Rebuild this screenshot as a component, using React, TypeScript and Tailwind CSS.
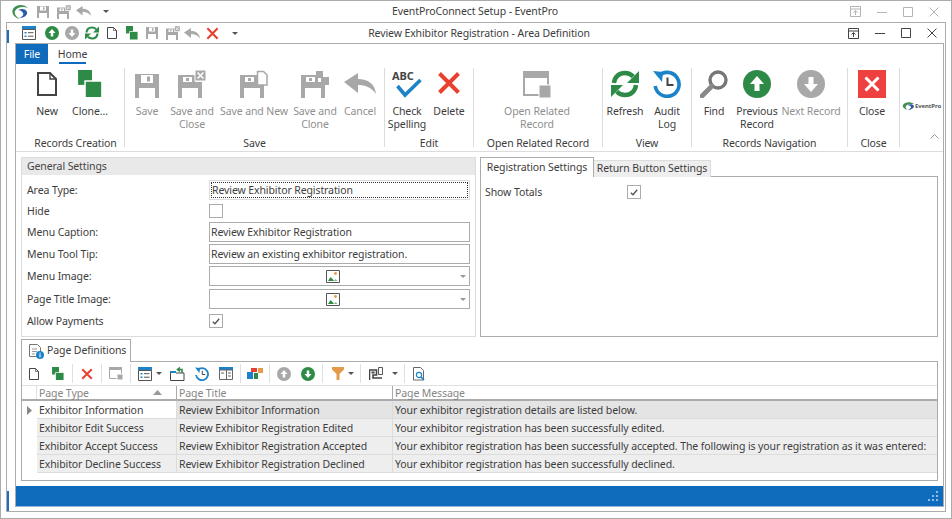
import React from "react";

const GREEN = "#2e8b47";
const GRAY = "#a8a8a8";
const BLUE = "#1d83c9";
const RED = "#e8412f";

type IconProps = { size?: number; color?: string };

const Floppy = ({ size = 24, color = GRAY }: IconProps) => (
  <svg width={size} height={size} viewBox="0 0 24 24" className="block shrink-0">
    <path d="M0 0h24v24H0z" fill={color} />
    <path d="M6 1h12v8H6z" fill="#fff" />
    <path d="M12 2.5h3v5h-3z" fill={color} />
    <path d="M4 14h16v10H4z" fill="#fff" />
  </svg>
);

const FloppyBadge = ({ size = 28, badge }: { size?: number; badge: "x" | "doc" | "clone" }) => (
  <svg width={size} height={size} viewBox="0 0 28 28" className="block shrink-0">
    <path d="M0 5h17v7h7v16H0z" fill={GRAY} />
    <path d="M5 7h9v5H5z" fill="#fff" />
    <path d="M8 8h3v3H8z" fill={GRAY} />
    <path d="M4 18h16v10H4z" fill="#fff" />
    {badge === "x" && (
      <>
        <path d="M17 0h11v11H17z" fill={GRAY} stroke="#fff" />
        <path d="M19.5 2.5l6 6M25.5 2.5l-6 6" stroke="#fff" strokeWidth="1.6" />
      </>
    )}
    {badge === "doc" && (
      <path d="M17.5 1.5h6l3.5 3.5v10h-9.5z" fill="#fff" stroke={GRAY} strokeWidth="1.5" />
    )}
    {badge === "clone" && (
      <>
        <path d="M15 1h7v7h-7z" fill={GRAY} />
        <path d="M20 7h8v8h-8z" fill={GRAY} />
      </>
    )}
  </svg>
);

const Undo = ({ size = 32, color = GRAY }: IconProps) => (
  <svg width={size} height={(size * 22) / 32} viewBox="0 0 32 22" className="block shrink-0">
    <path d="M0 9L14 0v6C24 6 31 11 32 21 27 14 21 12 14 12v8z" fill={color} />
  </svg>
);

const Cross = ({ size = 24, color = RED }: IconProps) => (
  <svg width={size} height={size} viewBox="0 0 24 24" className="block shrink-0">
    <path d="M2.5 2.5l19 19M21.5 2.5l-19 19" stroke={color} strokeWidth="4" fill="none" />
  </svg>
);

const Doc = ({ w = 20, h = 24, color = "#444" }: { w?: number; h?: number; color?: string }) => (
  <svg width={w} height={h} viewBox="0 0 20 24" className="block shrink-0">
    <path d="M1 1h12l6 6v16H1z" fill="#fff" stroke={color} strokeWidth="2" />
    <path d="M13 1v6h6" fill="none" stroke={color} strokeWidth="1.4" />
  </svg>
);

const Clone = ({ size = 24 }: IconProps) => (
  <svg width={size} height={size * 1.16} viewBox="0 0 24 28" className="block shrink-0">
    <path d="M0 0h14v15H0z" fill={GREEN} />
    <path d="M7 11h17v17H7z" fill={GREEN} stroke="#fff" strokeWidth="1.5" />
  </svg>
);

const CircleArrow = ({ size = 28, color = GREEN, down = false }: IconProps & { down?: boolean }) => (
  <svg width={size} height={size} viewBox="0 0 28 28" className="block shrink-0">
    <circle cx="14" cy="14" r="14" fill={color} />
    <path
      d={down ? "M14 22l-7-8h4.5V7h5v7H21z" : "M14 6l7 8h-4.5v7h-5v-7H7z"}
      fill="#fff"
    />
  </svg>
);

const Refresh = ({ size = 28, color = GREEN }: IconProps) => (
  <svg width={size} height={size} viewBox="0 0 28 28" className="block shrink-0">
    <path d="M3 13C3.5 7 8 3 14 3c3.5 0 6.2 1.4 8.2 3.6" fill="none" stroke={color} strokeWidth="4.4" />
    <path d="M28 1v12H16z" fill={color} />
    <path d="M25 15c-.5 6-5 10-11 10-3.5 0-6.2-1.4-8.2-3.6" fill="none" stroke={color} strokeWidth="4.4" />
    <path d="M0 27V15h12z" fill={color} />
  </svg>
);

const History = ({ size = 28, color = BLUE }: IconProps) => (
  <svg width={size} height={size} viewBox="0 0 28 28" className="block shrink-0">
    <path d="M5 6.5A12 12 0 1 1 2.2 16" fill="none" stroke={color} strokeWidth="3.6" />
    <path d="M0 1l10 1-1 10z" fill={color} />
    <path d="M14.5 7.5v7.5h6" fill="none" stroke="#444" strokeWidth="2" />
  </svg>
);

const Magnifier = () => (
  <svg width="28" height="28" viewBox="0 0 28 28" className="block shrink-0">
    <circle cx="18" cy="10" r="8" fill="#fff" stroke="#777" strokeWidth="3.4" />
    <path d="M12 16L2 26" stroke="#888" strokeWidth="4.6" strokeLinecap="round" />
  </svg>
);

const OpenRelated = () => (
  <svg width="28" height="27" viewBox="0 0 28 27" className="block shrink-0">
    <path d="M0 0h26v6H0z" fill={GRAY} />
    <path d="M1 6h24v18H1z" fill="#fff" stroke={GRAY} strokeWidth="2" />
    <path d="M16 14h12v13H16z" fill={GRAY} stroke="#fff" />
  </svg>
);

const AppWindow = ({ size = 14 }: IconProps) => (
  <svg width={size} height={size} viewBox="0 0 14 14" className="block shrink-0">
    <path d="M0 0h14v3.5H0z" fill={BLUE} />
    <path d="M.5 3.5h13v10H.5z" fill="#fff" stroke="#555" />
    <path d="M2.5 6h2v1.5h-2zM2.5 9.5h2V11h-2z" fill={BLUE} />
    <path d="M6 6.7h5.5M6 10.2h5.5" stroke="#555" />
  </svg>
);

const ImageGlyph = () => (
  <svg width="14" height="13" viewBox="0 0 14 13" className="block shrink-0">
    <path d="M.5.5h13v12H.5z" fill="#fff" stroke="#555" />
    <circle cx="9.5" cy="3.5" r="1.4" fill="#e39a4a" />
    <path d="M2 11l2.5-4L7 9.5 8 11z" fill={GREEN} />
    <path d="M8 11l1.5-2 2 2z" fill="#7fb08d" />
  </svg>
);

const Drop = ({ color = "#555" }: { color?: string }) => (
  <svg width="6" height="3" viewBox="0 0 6 3" className="block shrink-0">
    <path d="M0 0h6L3 3z" fill={color} />
  </svg>
);

const Check = () => (
  <svg width="8" height="7" viewBox="0 0 8 7">
    <path d="M.8 3.8l2.2 2L7.2.8" fill="none" stroke="#555" strokeWidth="1.4" />
  </svg>
);

const CheckBox = ({ checked = false }: { checked?: boolean }) => (
  <span className="flex h-[14px] w-[14px] items-center justify-center border border-[#ababab] bg-white">
    {checked && <Check />}
  </span>
);

const Sep = ({ className }: { className: string }) => (
  <span className={`h-[19px] w-px shrink-0 bg-[#e0e0e0] ${className}`} />
);

const WinControls = ({ color }: { color: string }) => (
  <>
    <svg width="11" height="11" viewBox="0 0 11 11" className="block">
      <path d="M.5.5h10v10H.5zM.5 3h10" fill="none" stroke={color} />
      <path d="M5.5 9V5M3.5 6.5l2-2 2 2" fill="none" stroke={color} />
    </svg>
    <svg width="10" height="10" viewBox="0 0 10 10" className="ml-[16px] block">
      <path d="M0 5.5h10" stroke={color} />
    </svg>
    <svg width="10" height="10" viewBox="0 0 10 10" className="ml-[16px] block">
      <path d="M.5.5h9v9h-9z" fill="none" stroke={color} />
    </svg>
    <svg width="10" height="10" viewBox="0 0 10 10" className="ml-[16px] block">
      <path d="M.5.5l9 9M9.5.5l-9 9" fill="none" stroke={color} />
    </svg>
  </>
);

const RibbonBtn = ({
  className,
  lines,
  disabled,
  children,
}: {
  className: string;
  lines: string[];
  disabled?: boolean;
  children: React.ReactNode;
}) => (
  <div className={`flex shrink-0 flex-col items-center pt-[2px] ${className}`}>
    <div className="flex h-[28px] items-end justify-center">{children}</div>
    <div
      className={`mt-[7px] whitespace-nowrap text-center leading-[13px] ${
        disabled ? "text-[#8f8f8f]" : "text-[#3d3d3d]"
      }`}
    >
      {lines.map((l) => (
        <div key={l}>{l}</div>
      ))}
    </div>
  </div>
);

const RibbonGroup = ({
  className,
  label,
  children,
}: {
  className: string;
  label: string;
  children: React.ReactNode;
}) => (
  <div className={`flex shrink-0 flex-col border-r border-[#dcdcdc] ${className}`}>
    <div className="flex h-[68px]">{children}</div>
    <div className="h-[11px] whitespace-nowrap pt-[1px] text-center leading-[13px] text-[#3d3d3d]">{label}</div>
  </div>
);

const FormRow = ({
  label,
  className,
  children,
}: {
  label: string;
  className: string;
  children: React.ReactNode;
}) => (
  <div className={`flex items-center ${className}`}>
    <div className="w-[182px] shrink-0 text-[#3d3d3d]">{label}</div>
    {children}
  </div>
);

const TextField = ({ value }: { value: string }) => (
  <div className="flex h-[20px] w-[261px] items-center border border-[#ababab] bg-white pl-[1px] text-[#3d3d3d]">
    {value}
  </div>
);

const ImageField = () => (
  <div className="flex h-[20px] w-[261px] items-center border border-[#ababab] bg-white">
    <div className="flex flex-1 justify-center">
      <ImageGlyph />
    </div>
    <div className="flex w-[13px] justify-center">
      <Drop color="#999" />
    </div>
  </div>
);

const rows = [
  ["Exhibitor Information", "Review Exhibitor Information", "Your exhibitor registration details are listed below."],
  ["Exhibitor Edit Success", "Review Exhibitor Registration Edited", "Your exhibitor registration has been successfully edited."],
  ["Exhibitor Accept Success", "Review Exhibitor Registration Accepted", "Your exhibitor registration has been successfully accepted. The following is your registration as it was entered:"],
  ["Exhibitor Decline Success", "Review Exhibitor Registration Declined", "Your exhibitor registration has been successfully declined."],
];

export default function App() {
  return (
    <div className="flex h-[519px] w-[952px] flex-col overflow-hidden border border-[#ababab] bg-white font-['Noto_Sans',sans-serif] text-[10.5px] leading-[13px] tracking-[-0.1px]">
      {/* outer title bar */}
      <div className="grid h-[21px] shrink-0 grid-cols-[1fr_auto_1fr] items-center">
        <div className="flex items-center pl-[11px]">
          <svg width="16" height="14" viewBox="0 0 16 14" className="block">
            <path d="M16 3C12-1 4-1 1 4c-2 4 1 9 7 10-4-2-6-5-5-8 2-4 8-5 13-3z" fill="#3f8f4f" />
            <path d="M6 5c4-2 8-1 9 2 1 3-3 6-8 6 3-1 5-3 4-5-1-2-3-3-5-3z" fill="#2a5ca8" />
          </svg>
          <span className="ml-[9px]"><Floppy size={12} /></span>
          <span className="ml-[8px]"><FloppyBadge size={14} badge="x" /></span>
          <span className="ml-[5px]"><Undo size={15} /></span>
          <span className="ml-[12px]"><Drop /></span>
        </div>
        <div className="whitespace-nowrap pr-[2px] text-[#3d3d3d]">EventProConnect Setup - EventPro</div>
        <div className="flex items-center justify-end pr-[12px]">
          <WinControls color="#b4b4b4" />
        </div>
      </div>

      {/* child window */}
      <div className="ml-[5px] flex h-[490px] w-[940px] shrink-0 flex-col border border-[#ababab]">
        <div className="grid h-[20px] shrink-0 grid-cols-[1fr_auto_1fr] items-center">
          <div className="flex items-center pl-[15px]">
            <AppWindow />
            <span className="ml-[9px]"><CircleArrow size={14} /></span>
            <span className="ml-[6px]"><CircleArrow size={14} color={GRAY} down /></span>
            <span className="ml-[6px]"><Refresh size={14} /></span>
            <span className="ml-[8px]"><Doc w={10} h={12} /></span>
            <span className="ml-[9px]"><Clone size={12} /></span>
            <span className="ml-[8px]"><Floppy size={12} /></span>
            <span className="ml-[8px]"><FloppyBadge size={14} badge="x" /></span>
            <span className="ml-[4px]"><Undo size={16} /></span>
            <span className="ml-[6px]"><Cross size={13} /></span>
            <span className="ml-[13px]"><Drop /></span>
          </div>
          <div className="whitespace-nowrap pl-[6px] text-[#3d3d3d]">Review Exhibitor Registration - Area Definition</div>
          <div className="flex items-center justify-end pr-[8px]">
            <WinControls color="#444" />
          </div>
        </div>

        <div className="flex min-h-0 flex-1">
          <div className="flex w-[8px] shrink-0 flex-col justify-between">
            <div className="-mt-[13px] h-[13px] w-[2px] bg-[#1d6fbe]" />
            <div className="h-[20px] w-[2px] bg-[#1d6fbe]" />
          </div>

          <div className="mb-[4px] flex w-[929px] shrink-0 flex-col border-x border-t border-x-[#ababab] border-t-[#ababab]">
            {/* tabs */}
            <div className="flex h-[20px] shrink-0 items-center">
              <div className="flex h-[20px] w-[32px] items-center justify-center bg-[#0f6cbd] text-white">File</div>
              <div className="ml-[11px] flex h-[20px] w-[27px] flex-col items-center justify-between pt-[4px] text-[#3d3d3d]">
                <span>Home</span>
                <span className="h-[2px] w-[27px] bg-[#0f6cbd]" />
              </div>
            </div>

            {/* ribbon */}
            <div className="flex h-[88px] shrink-0 border-b border-[#dcdcdc] py-[4px]">
              <RibbonGroup className="w-[109px] pl-[11px]" label="Records Creation">
                <RibbonBtn className="w-[40px]" lines={["New"]}>
                  <span className="mb-[2px]"><Doc /></span>
                </RibbonBtn>
                <RibbonBtn className="w-[46px]" lines={["Clone..."]}>
                  <Clone />
                </RibbonBtn>
              </RibbonGroup>
              <RibbonGroup className="w-[260px]" label="Save">
                <RibbonBtn className="w-[44px]" lines={["Save"]} disabled><Floppy /></RibbonBtn>
                <RibbonBtn className="w-[46px]" lines={["Save and", "Close"]} disabled><FloppyBadge badge="x" /></RibbonBtn>
                <RibbonBtn className="w-[78px]" lines={["Save and New"]} disabled><FloppyBadge badge="doc" /></RibbonBtn>
                <RibbonBtn className="w-[44px]" lines={["Save and", "Clone"]} disabled><FloppyBadge badge="clone" /></RibbonBtn>
                <RibbonBtn className="w-[46px]" lines={["Cancel"]} disabled>
                  <span className="mb-[3px]"><Undo /></span>
                </RibbonBtn>
              </RibbonGroup>
              <RibbonGroup className="w-[89px]" label="Edit">
                <RibbonBtn className="w-[44px]" lines={["Check", "Spelling"]}>
                  <div className="flex w-[30px] flex-col">
                    <span className="text-[11px] font-bold leading-[11px] text-[#444]">ABC</span>
                    <svg width="30" height="20" viewBox="0 0 30 20" className="-mt-[3px] block">
                      <path d="M5.5 8l7.5 9L28.5 2" fill="none" stroke={BLUE} strokeWidth="3.6" />
                    </svg>
                  </div>
                </RibbonBtn>
                <RibbonBtn className="w-[40px]" lines={["Delete"]}>
                  <span className="mb-[3px]"><Cross /></span>
                </RibbonBtn>
              </RibbonGroup>
              <RibbonGroup className="w-[129px]" label="Open Related Record">
                <RibbonBtn className="w-[126px]" lines={["Open Related", "Record"]} disabled><OpenRelated /></RibbonBtn>
              </RibbonGroup>
              <RibbonGroup className="w-[89px]" label="View">
                <RibbonBtn className="w-[44px]" lines={["Refresh"]}><Refresh /></RibbonBtn>
                <RibbonBtn className="w-[40px]" lines={["Audit", "Log"]}><History /></RibbonBtn>
              </RibbonGroup>
              <RibbonGroup className="w-[156px]" label="Records Navigation">
                <RibbonBtn className="w-[44px]" lines={["Find"]}><Magnifier /></RibbonBtn>
                <RibbonBtn className="w-[42px]" lines={["Previous", "Record"]}><CircleArrow /></RibbonBtn>
                <RibbonBtn className="w-[66px]" lines={["Next Record"]} disabled><CircleArrow color={GRAY} down /></RibbonBtn>
              </RibbonGroup>
              <RibbonGroup className="w-[52px]" label="Close">
                <RibbonBtn className="w-[48px]" lines={["Close"]}>
                  <svg width="28" height="28" viewBox="0 0 28 28" className="block">
                    <path d="M0 0h28v28H0z" fill="#ef4040" />
                    <path d="M7.5 7.5l13 13M20.5 7.5l-13 13" stroke="#fff" strokeWidth="3" />
                  </svg>
                </RibbonBtn>
              </RibbonGroup>
              <div className="flex flex-1 flex-col">
                <div className="mt-[34px] flex items-center justify-center">
                  <svg width="13" height="8" viewBox="0 0 13 8" className="block">
                    <path d="M12 2C9-.5 3-.5 1 3c-1 2 1 4 5 5-2-1-3-3-2-4 1-2 5-2 8-2z" fill="#3f8f4f" />
                    <path d="M5 3c3-1 6-1 7 1 0 2-3 4-6 4 2-1 3-2 3-3S7 3 5 3z" fill="#2a5ca8" />
                  </svg>
                  <span className="whitespace-nowrap text-[6px] font-bold leading-[8px] tracking-[-0.1px] text-[#555]">EventPro</span>
                </div>
                <div className="mt-[24px] flex justify-end pr-[4px]">
                  <svg width="9" height="5" viewBox="0 0 9 5" className="block">
                    <path d="M.5 4.5l4-4 4 4" fill="none" stroke="#999" />
                  </svg>
                </div>
              </div>
            </div>

            {/* content */}
            <div className="flex min-h-0 flex-1 flex-col px-[5px] pt-[5px]">
              <div className="flex h-[180px] shrink-0 gap-[4px]">
                <div className="flex w-[455px] shrink-0 flex-col border border-[#dcdcdc]">
                  <div className="flex h-[17px] shrink-0 items-center bg-[#e9e9e9] pl-[5px] text-[#444]">General Settings</div>
                  <div className="flex flex-col pl-[5px] pt-[5px]">
                    <FormRow label="Area Type:" className="h-[20px]">
                      <div className="flex h-[20px] w-[261px] items-center border border-[#dcdcdc] bg-white p-[1px]">
                        <div className="flex h-full w-full items-center border border-dotted border-[#333] text-[#3d3d3d]">
                          Review Exhibitor Registration
                        </div>
                      </div>
                    </FormRow>
                    <FormRow label="Hide" className="h-[22px]"><CheckBox /></FormRow>
                    <FormRow label="Menu Caption:" className="h-[20px]"><TextField value="Review Exhibitor Registration" /></FormRow>
                    <FormRow label="Menu Tool Tip:" className="mt-[2px] h-[20px]"><TextField value="Review an existing exhibitor registration." /></FormRow>
                    <FormRow label="Menu Image:" className="mt-[2px] h-[20px]"><ImageField /></FormRow>
                    <FormRow label="Page Title Image:" className="mt-[3px] h-[20px]"><ImageField /></FormRow>
                    <FormRow label="Allow Payments" className="h-[24px]"><CheckBox checked /></FormRow>
                  </div>
                </div>

                <div className="flex w-[458px] shrink-0 flex-col">
                  <div className="relative z-10 -mb-px flex h-[20px] shrink-0 items-end">
                    <div className="flex h-[20px] w-[114px] items-center justify-center whitespace-nowrap border border-b-0 border-[#ababab] bg-white text-[#3d3d3d]">
                      Registration Settings
                    </div>
                    <div className="flex h-[17px] w-[117px] items-center justify-center whitespace-nowrap border-t border-r border-[#dcdcdc] bg-[#eeeeee] pb-[2px] text-[#3d3d3d]">
                      Return Button Settings
                    </div>
                  </div>
                  <div className="flex-1 border border-[#ababab] bg-white pl-[4px] pt-[8px]">
                    <div className="flex items-center">
                      <div className="w-[142px] text-[#3d3d3d]">Show Totals</div>
                      <CheckBox checked />
                    </div>
                  </div>
                </div>
              </div>

              {/* page definitions */}
              <div className="mt-[2px] flex flex-col">
                <div className="relative z-10 -mb-px flex">
                  <div className="flex h-[23px] w-[110px] items-center border border-b-0 border-[#ababab] bg-white pl-[7px] text-[#3d3d3d]">
                    <svg width="15" height="15" viewBox="0 0 15 15" className="block shrink-0">
                      <path d="M.5.5h8l3 3v9H.5z" fill="#fff" stroke="#777" />
                      <path d="M3 5h5M3 7.5h5M3 10h3" stroke="#999" />
                      <circle cx="11" cy="11" r="4" fill={BLUE} />
                      <path d="M11 10v3.4M11 8.6v1" stroke="#fff" />
                    </svg>
                    <span className="ml-[3px] whitespace-nowrap pb-[1px]">Page Definitions</span>
                  </div>
                </div>
                <div className="flex h-[120px] flex-col border border-[#ababab] bg-white">
                  {/* toolbar */}
                  <div className="flex h-[24px] shrink-0 items-center border-b border-[#e0e0e0]">
                    <span className="ml-[7px]"><Doc w={10} h={12} /></span>
                    <span className="ml-[13px]"><Clone size={12} /></span>
                    <Sep className="ml-[8px]" />
                    <span className="ml-[8px]"><Cross size={12} /></span>
                    <Sep className="ml-[8px]" />
                    <span className="ml-[7px]">
                      <svg width="14" height="13" viewBox="0 0 14 13" className="block">
                        <path d="M.5.5h12v11H.5z" fill="#fff" stroke={GRAY} />
                        <path d="M0 0h13v3H0z" fill={GRAY} />
                        <path d="M8 7h6v6H8z" fill={GRAY} stroke="#fff" />
                      </svg>
                    </span>
                    <Sep className="ml-[7px]" />
                    <span className="ml-[7px]"><AppWindow /></span>
                    <span className="ml-[4px]"><Drop /></span>
                    <span className="ml-[8px]">
                      <svg width="15" height="14" viewBox="0 0 15 14" className="block">
                        <path d="M.5 4.5h4l1.5 1.5h8v7.5H.5z" fill="#fff" stroke="#444" />
                        <path d="M0 4h6v2H0z" fill={BLUE} />
                        <path d="M12 6V2.5H8M10 .5l-2.5 2 2.5 2" fill="none" stroke={GREEN} strokeWidth="1.6" />
                      </svg>
                    </span>
                    <span className="ml-[10px]"><History size={14} /></span>
                    <span className="ml-[10px]">
                      <svg width="14" height="13" viewBox="0 0 14 13" className="block">
                        <path d="M0 0h14v3H0z" fill={BLUE} />
                        <path d="M.5 3h13v9.5H.5zM7.5 3v9.5M9 6h3M9 9h3M2 6h3" fill="none" stroke="#666" />
                      </svg>
                    </span>
                    <Sep className="ml-[7px]" />
                    <span className="ml-[6px]">
                      <svg width="16" height="11" viewBox="0 0 16 11" className="block">
                        <path d="M4 0h6v4H4z" fill={RED} />
                        <path d="M0 4h6v7H0z" fill={BLUE} />
                        <path d="M7 5h4v6H7z" fill={GREEN} />
                        <path d="M11 0h5v5h-5z" fill="#e39a4a" />
                      </svg>
                    </span>
                    <Sep className="ml-[6px]" />
                    <span className="ml-[7px]"><CircleArrow size={14} color={GRAY} /></span>
                    <span className="ml-[10px]"><CircleArrow size={14} down /></span>
                    <Sep className="ml-[7px]" />
                    <span className="ml-[9px]">
                      <svg width="12" height="13" viewBox="0 0 12 13" className="block">
                        <path d="M0 0h12v2.5L7.5 7v6h-3V7L0 2.5z" fill="#e39a4a" />
                      </svg>
                    </span>
                    <span className="ml-[4px]"><Drop /></span>
                    <Sep className="ml-[6px]" />
                    <span className="ml-[8px]">
                      <svg width="14" height="14" viewBox="0 0 14 14" className="block">
                        <path d="M.5 13V3h7v5H4v3h9" fill="none" stroke="#444" strokeWidth="1.6" />
                        <path d="M2.5 4.5h3v2h-3z" fill="#444" />
                        <path d="M9.5.5h4v7h-4z" fill="#fff" stroke="#555" />
                      </svg>
                    </span>
                    <span className="ml-[9px]"><Drop /></span>
                    <Sep className="ml-[6px]" />
                    <span className="ml-[8px]">
                      <svg width="13" height="14" viewBox="0 0 13 14" className="block">
                        <path d="M.5.5h7l3 3v9.5H.5z" fill="#fff" stroke="#666" />
                        <circle cx="6" cy="8" r="2.6" fill="#fff" stroke={BLUE} strokeWidth="1.2" />
                        <path d="M8 10l3 3" stroke={BLUE} strokeWidth="1.6" />
                      </svg>
                    </span>
                  </div>

                  {/* grid header */}
                  <div className="flex h-[15px] shrink-0 items-center border-b-2 border-[#ababab] leading-[13px] text-[#858585]">
                    <div className="h-full w-[15px] shrink-0 border-r border-[#e0e0e0]" />
                    <div className="flex h-full w-[139px] shrink-0 items-center justify-between pl-[2px] pr-[14px]">
                      <span className="mt-[2px]">Page Type</span>
                      <svg width="9" height="5" viewBox="0 0 9 5" className="block">
                        <path d="M4.5 0L9 5H0z" fill="#999" />
                      </svg>
                    </div>
                    <div className="flex h-full w-[216px] shrink-0 items-center border-l border-[#aaa] pl-[2px]">
                      <span className="mt-[2px]">Page Title</span>
                    </div>
                    <div className="flex h-full flex-1 items-center border-l border-[#aaa] pl-[2px]">
                      <span className="mt-[2px]">Page Message</span>
                    </div>
                  </div>

                  {/* grid rows */}
                  {rows.map((r, i) => (
                    <div key={r[0]} className="flex h-[18px] shrink-0 items-center text-[#3d3d3d]">
                      <div className="flex h-full w-[15px] shrink-0 items-center justify-center">
                        {i === 0 && (
                          <svg width="5" height="9" viewBox="0 0 5 9" className="block">
                            <path d="M0 0l5 4.5L0 9z" fill="#888" />
                          </svg>
                        )}
                      </div>
                      <div className={`flex h-full w-[139px] shrink-0 items-center whitespace-nowrap border-b border-[#dcdcdc] pl-[2px] pt-[1px] ${i === 0 ? "bg-white" : "bg-[#eeeeee]"}`}>
                        {r[0]}
                      </div>
                      <div className={`flex h-full w-[216px] shrink-0 items-center whitespace-nowrap border-b border-l border-[#dcdcdc] pl-[2px] pt-[1px] ${i === 0 ? "bg-[#e4e4e4]" : "bg-[#eeeeee]"}`}>
                        {r[1]}
                      </div>
                      <div className={`flex h-full min-w-0 flex-1 items-center whitespace-nowrap border-b border-l border-[#dcdcdc] pl-[2px] pt-[1px] ${i === 0 ? "bg-[#e4e4e4]" : "bg-[#eeeeee]"}`}>
                        {r[2]}
                      </div>
                    </div>
                  ))}
                </div>
              </div>
            </div>

            {/* status bar */}
            <div className="flex h-[20px] shrink-0 items-center justify-end bg-[#0f6cbd] pr-[5px]">
              <svg width="10" height="10" viewBox="0 0 10 10" className="block">
                <path d="M8 0h2v2H8zM4 4h2v2H4zM8 4h2v2H8zM0 8h2v2H0zM4 8h2v2H4zM8 8h2v2H8z" fill="#8fbce4" />
              </svg>
            </div>
            <div className="h-px shrink-0 bg-[#8fb8dc]" />
          </div>
        </div>
      </div>
    </div>
  );
}
